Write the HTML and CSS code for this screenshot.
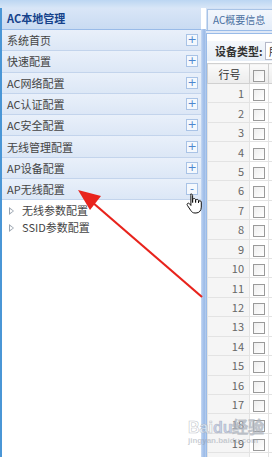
FILE: index.html
```html
<!DOCTYPE html>
<html lang="zh-CN">

<head>
  <meta charset="UTF-8" />
  <title>AC本地管理</title>
  <link rel="stylesheet" href="styles.css">
</head>

<body>
  <div class="page">
    <!-- 顶部条 -->
    <div class="top_strip"></div>
    <div class="main">
      <!-- 左侧菜单 -->
      <div class="side">
        <div class="side_title">AC本地管理</div>
        <ul class="menu">
          <li><span>系统首页</span><i class="plus">+</i></li>
          <li><span>快速配置</span><i class="plus">+</i></li>
          <li><span>AC网络配置</span><i class="plus">+</i></li>
          <li><span>AC认证配置</span><i class="plus">+</i></li>
          <li><span>AC安全配置</span><i class="plus">+</i></li>
          <li><span>无线管理配置</span><i class="plus">+</i></li>
          <li><span>AP设备配置</span><i class="plus">+</i></li>
          <li class="open"><span>AP无线配置</span><i class="plus">-</i></li>
        </ul>
        <ul class="sub_menu">
          <li><b class="tri"></b>无线参数配置</li>
          <li><b class="tri"></b>SSID参数配置</li>
        </ul>
      </div>
      <!-- 分隔条 -->
      <div class="splitter"></div>
      <!-- 右侧内容 -->
      <div class="content">
        <div class="tabs">
          <div class="tab">AC概要信息</div>
        </div>
        <div class="panel">
          <div class="toolbar">设备类型: <span class="select">所</span></div>
          <table class="grid">
            <thead>
              <tr><th class="num">行号</th><th class="chk"><b class="box"></b></th><th></th></tr>
            </thead>
            <tbody id="rows"></tbody>
          </table>
        </div>
      </div>
    </div>

    <!-- 红色箭头 -->
    <svg class="arrow" width="272" height="457" viewBox="0 0 272 457">
      <line x1="202" y1="297" x2="92" y2="202" stroke="#e8231c" stroke-width="2.2" />
      <polygon points="78,190 101,196 90,210" fill="#e8231c" />
    </svg>
    <!-- 手形光标 -->
    <svg class="hand" width="20" height="23" viewBox="0 0 20 22">
      <path d="M5 1.5c1 0 1.6.6 1.6 1.6V10V7.5c0-1 .7-1.5 1.5-1.5s1.5.6 1.5 1.5V10V8.3c0-.9.7-1.4 1.5-1.4s1.4.6 1.4 1.5V10.5V9.5c0-.8.7-1.3 1.4-1.3s1.4.6 1.4 1.4v5c0 3.4-2 5.9-5.3 5.9H9c-2.2 0-3.2-1-4.3-2.6L1.4 12.9c-.6-.9-.3-1.8.5-2.1.7-.3 1.3 0 1.8.6l1.2 1.6V3.1C4.9 2.1 4.1 1.5 5 1.5z" fill="#fff" stroke="#111" stroke-width="1" stroke-linejoin="round" />
    </svg>
    <!-- 水印 -->
    <div class="mark">Bai<span class="paw">du</span>经验<div class="mark_sub">jingyan.baidu.com</div></div>
  </div>
  <script src="rows.js"></script>
</body>

</html>
```

FILE: rows.js
```js
var tbody = document.getElementById('rows');
var html = '';
for (var i = 1; i <= 20; i++) {
  html += '<tr><td class="num">' + i + '</td><td class="chk"><b class="box"></b></td><td></td></tr>';
}
tbody.innerHTML = html;
```

FILE: styles.css
```css
body,
ul,
li {
  margin: 0px;
  padding: 0px;
}

body {
  font-family: "Noto Sans CJK SC", "DejaVu Sans", sans-serif;
  font-size: 11px;
  color: #333;
  background: #fff;
  overflow: hidden;
}

.page {
  width: 272px;
  height: 457px;
  position: relative;
  overflow: hidden;
  display: flex;
  flex-direction: column;
}

.top_strip {
  height: 8px;
  flex-shrink: 0;
  background: linear-gradient(#bcd6f2, #d8e6f7);
}

.main {
  flex: 1;
  min-height: 0;
  overflow: hidden;
  display: flex;
}

/* 左侧菜单 */
.side {
  width: 199px;
  flex-shrink: 0;
  border-left: 2px solid #4a96d6;
  background: #fff;
}

.side_title {
  height: 21px;
  line-height: 21px;
  padding-left: 5px;
  font-weight: bold;
  color: #15428b;
  background: linear-gradient(#d9e6f7, #c9dbf2);
  border-bottom: 1px solid #99bbe8;
}

.menu {
  list-style: none;
}

.menu li {
  height: 20.3px;
  border-bottom: 1px solid #c3d4ec;
  background: linear-gradient(#e9f0fa, #dce7f6);
  display: flex;
  align-items: center;
  justify-content: space-between;
  padding: 0 3px 0 5px;
}

.menu li span {
  line-height: 20px;
  color: #444;
}

.plus {
  width: 10px;
  height: 10px;
  border: 1px solid #a9c3e6;
  background: #f4f8fd;
  color: #4d86cf;
  font-style: normal;
  font-size: 11px;
  line-height: 10px;
  text-align: center;
  font-family: "DejaVu Sans", sans-serif;
}

.sub_menu {
  list-style: none;
  padding-top: 2px;
}

.sub_menu li {
  height: 17px;
  line-height: 17px;
  padding-left: 7px;
  display: flex;
  align-items: center;
  color: #444;
}

.tri {
  width: 0;
  height: 0;
  border-left: 5px solid #9aa4b0;
  border-top: 4px solid transparent;
  border-bottom: 4px solid transparent;
  margin-right: 8px;
  position: relative;
}

.tri::after {
  content: '';
  position: absolute;
  left: -4px;
  top: -2px;
  border-left: 3px solid #fff;
  border-top: 2px solid transparent;
  border-bottom: 2px solid transparent;
}

/* 分隔条 */
.splitter {
  width: 5px;
  flex-shrink: 0;
  margin-top: 21px;
  background: linear-gradient(90deg, #c8daf3, #a6c3ec 40%, #9dbbe6 80%, #c4d7f1);
}

/* 右侧内容 */
.content {
  flex: 1;
  min-width: 0;
  overflow: hidden;
  display: flex;
  flex-direction: column;
  background: #dfe8f6;
}

.tabs {
  height: 22px;
  flex-shrink: 0;
  padding-left: 1px;
  background: linear-gradient(#d4e2f5, #cbdcf2);
  border-bottom: 1px solid #99bbe8;
}

.tab {
  height: 20px;
  margin-top: 1px;
  width: 80px;
  line-height: 20px;
  padding-left: 5px;
  color: #4a6f9f;
  font-size: 10px;
  background: linear-gradient(#f3f7fc, #e4edf9);
  border: 1px solid #a8c3e6;
  border-bottom: 0;
}

.panel {
  flex: 1;
  margin-top: 2px;
  border-left: 1px solid #99bbe8;
  border-top: 1px solid #99bbe8;
  background: #fff;
}

.toolbar {
  height: 20px;
  margin-top: 7px;
  padding-left: 8px;
  line-height: 20px;
  font-size: 11px;
  font-weight: bold;
  color: #333;
  background: linear-gradient(#f4f7fb, #e6edf6);
  white-space: nowrap;
}

.select {
  font-weight: normal;
  border: 1px solid #b5b8c8;
  background: #fff;
  padding: 0 3px;
}

.grid {
  border-collapse: collapse;
  width: 100px;
  margin-top: 2px;
}

.grid th,
.grid td {
  padding: 0;
  border: 1px solid #e3e3e3;
}

.grid th {
  height: 19px;
  font-weight: normal;
  background: linear-gradient(#fafafa, #ececec);
  border-color: #d0d0d0;
}

.grid td {
  height: 18.45px;
}

.grid .num {
  width: 36px;
  text-align: right;
  padding-right: 5px;
  color: #666;
  background: #f5f5f5;
}

.grid th.num {
  text-align: center;
  padding-right: 0;
  padding-left: 2px;
  color: #333;
  background: linear-gradient(#fafafa, #ececec);
}

.grid .chk {
  width: 18px;
  text-align: center;
}

.box {
  display: inline-block;
  width: 10px;
  height: 10px;
  border: 1px solid #9a9a9a;
  background: linear-gradient(135deg, #eee, #fff);
  vertical-align: middle;
}

.arrow {
  position: absolute;
  left: 0;
  top: 0;
  pointer-events: none;
}

.hand {
  position: absolute;
  left: 186px;
  top: 192px;
}

.mark {
  position: absolute;
  left: 188px;
  top: 414px;
  font-family: "Liberation Sans", sans-serif;
  font-size: 16px;
  font-weight: bold;
  color: rgba(255, 255, 255, 0.5);
  -webkit-text-stroke: 0.6px rgba(150, 158, 170, 0.6);
  white-space: nowrap;
  pointer-events: none;
}

.paw {
  color: rgba(80, 110, 190, 0.3);
}

.mark_sub {
  font-size: 8px;
  -webkit-text-stroke: 0;
  color: rgba(150, 158, 170, 0.5);
  margin-top: -2px;
}
```
